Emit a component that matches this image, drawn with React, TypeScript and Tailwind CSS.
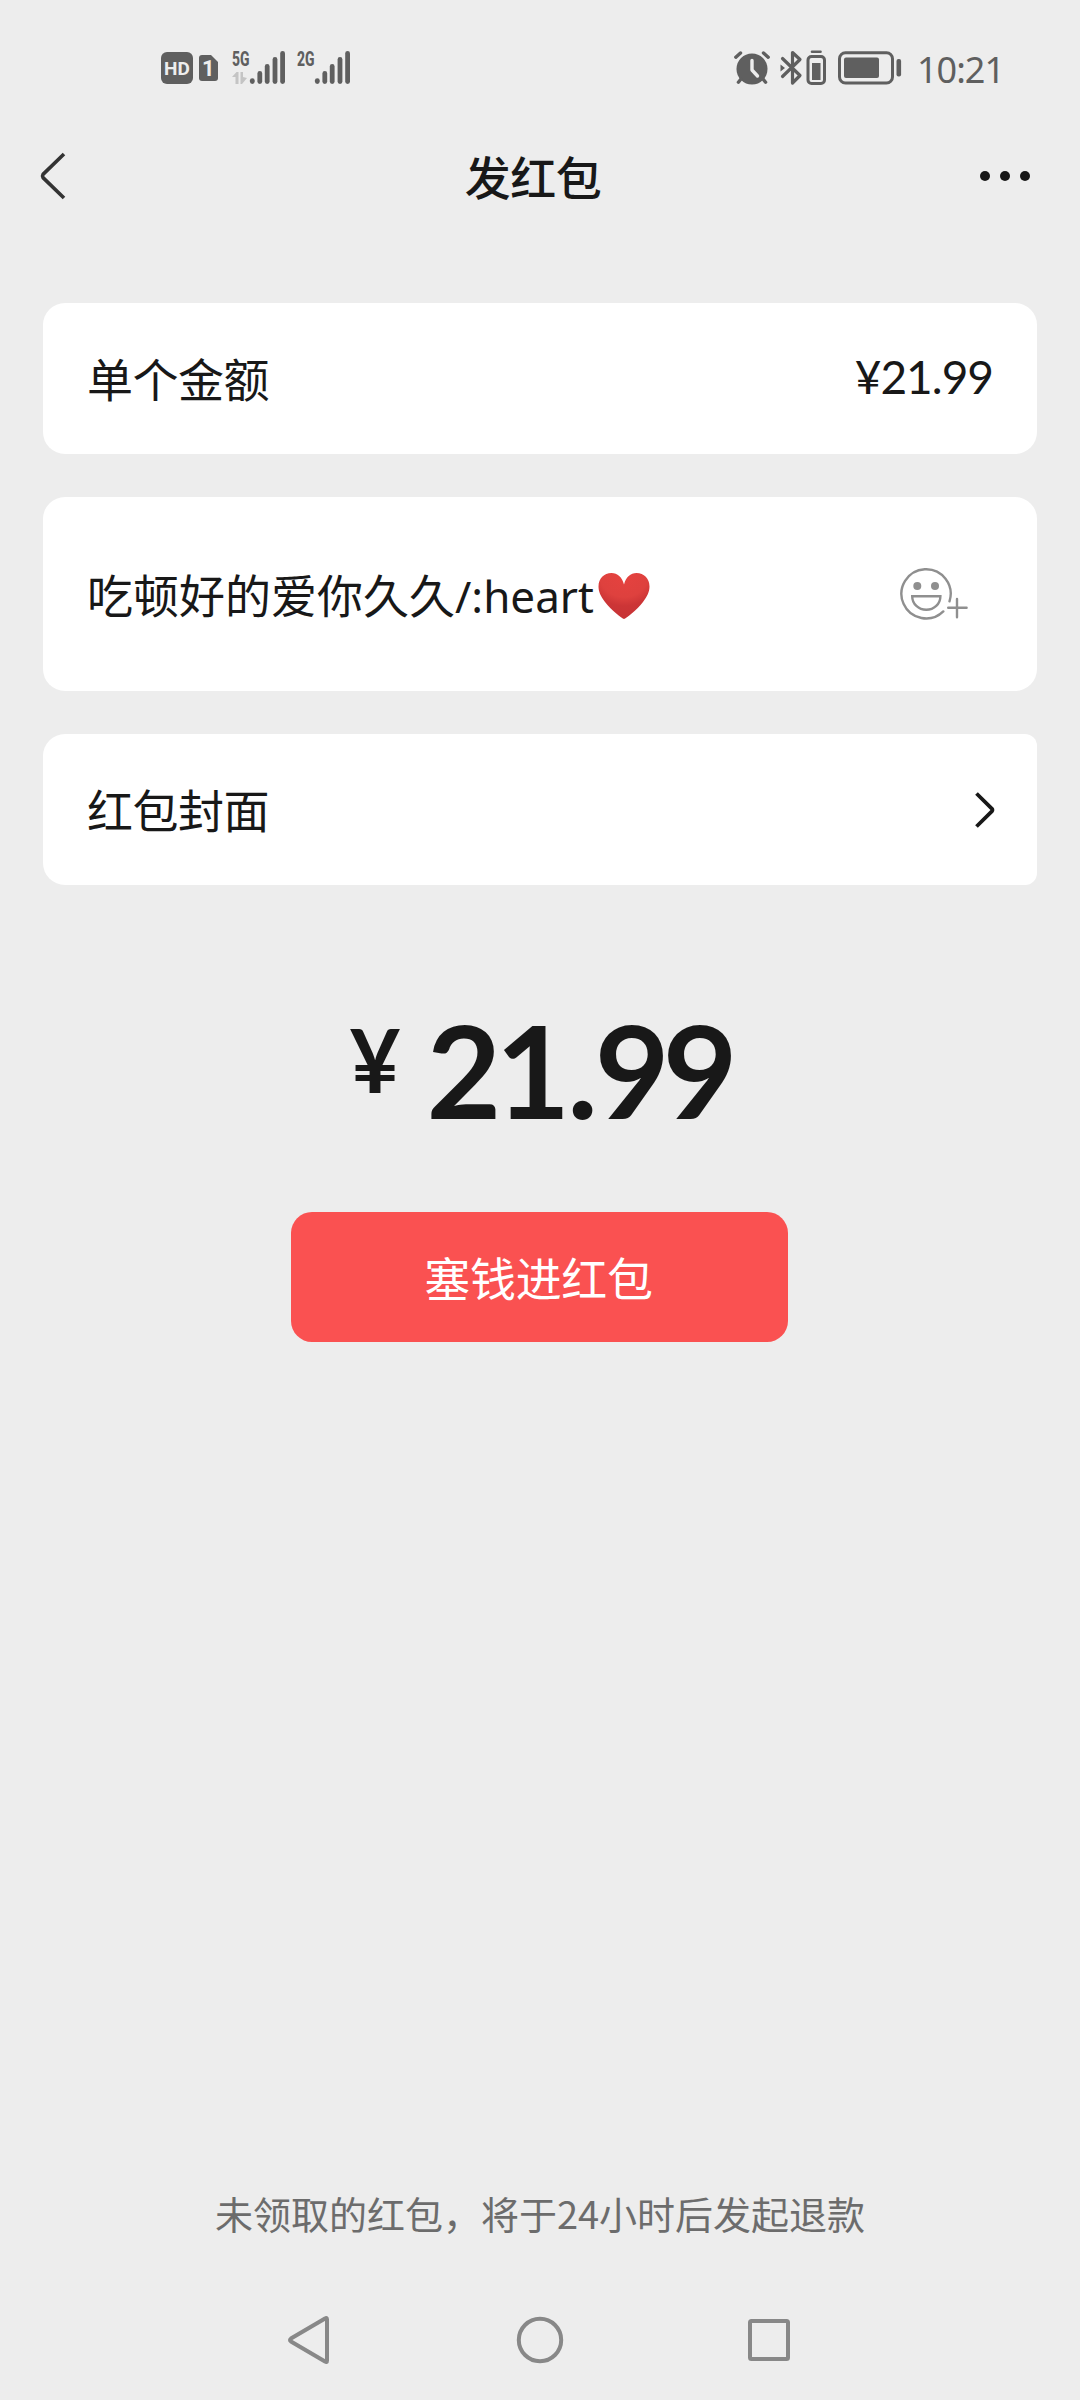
import type { ReactNode } from "react";

const AMOUNT = "21.99";

function SignalBars({ label, transfer = false }: { label: string; transfer?: boolean }) {
  return (
    <svg width="54" height="36" viewBox="0 0 54 36" fill="#5f5f5f" className="overflow-visible">
      <text
        x="0"
        y="16"
        fontSize="20"
        fontWeight="800"
        textLength="17.5"
        lengthAdjust="spacingAndGlyphs"
        className="font-['Roboto',sans-serif]"
      >
        {label}
      </text>
      {transfer && (
        <path d="M0 27L4.500 22H6.500V34H3.500V27ZM8.500 22H11V27L15 28L10 34H8.500Z" fill="#c4c4c4" />
      )}
      <g stroke="#5f5f5f" strokeWidth="4.8" strokeLinecap="round">
        <path d="M20.3 30.6V31.6" />
        <path d="M27.8 23.4V31.6" />
        <path d="M35.2 16.4V31.6" />
        <path d="M43 9.4V31.6" />
        <path d="M50.6 3.4V31.6" />
      </g>
    </svg>
  );
}

function AlarmIcon() {
  return (
    <svg width="36" height="34" viewBox="0 0 36 34" fill="none">
      <circle cx="18" cy="18" r="15.5" fill="#5f5f5f" />
      <path
        d="M1.8 6.2L6.5 2M34.2 6.2L29.5 2M7 28L4.4 31.2M29 28L31.6 31.2"
        stroke="#5f5f5f"
        strokeWidth="3.4"
        strokeLinecap="round"
      />
      <path d="M18 9.5V19L23.5 25" stroke="#ededed" strokeWidth="3.4" strokeLinecap="round" strokeLinejoin="round" />
    </svg>
  );
}

function BluetoothIcon() {
  return (
    <svg width="46" height="36" viewBox="0 0 46 36" fill="none" stroke="#5f5f5f">
      <path
        d="M2.5 8.5L20 25.5L12.5 33V2.5L20 9.5L2.5 26.5"
        strokeWidth="3.2"
        strokeLinecap="round"
        strokeLinejoin="round"
      />
      <path d="M0.5 14.5L5 18L0.5 21.5Z" fill="#5f5f5f" stroke="none" />
      <rect x="28" y="6.5" width="16.5" height="27" rx="3.5" strokeWidth="3" />
      <path d="M32 1.8H40.5" strokeWidth="2.6" strokeLinecap="round" />
      <rect x="32" y="13" width="8.5" height="17" fill="#5f5f5f" stroke="none" />
    </svg>
  );
}

function BatteryIcon() {
  return (
    <svg width="64" height="34" viewBox="0 0 64 34" fill="none">
      <rect x="1.5" y="1.8" width="53" height="30.2" rx="6" stroke="#5f5f5f" strokeWidth="3" />
      <rect x="6" y="6.5" width="35" height="20.5" rx="2" fill="#5f5f5f" />
      <rect x="58.5" y="8" width="4.6" height="17.5" rx="2" fill="#5f5f5f" />
    </svg>
  );
}

function StatusBar() {
  return (
    <div className="flex h-[136px] items-center pr-[76px] pl-[161px] text-[#5f5f5f]">
      <span className="flex h-8 w-8 items-center justify-center rounded-[6px] bg-[#5f5f5f] pt-0.5 font-['Roboto',sans-serif] text-[19px] font-bold text-[#ededed]">
        HD
      </span>
      <svg width="19" height="28" viewBox="0 0 19 28" className="ml-[6px]">
        <path d="M3 1H12L19 8V24Q19 27 16 27H3Q0 27 0 24V4Q0 1 3 1Z" fill="#5f5f5f" />
        <text x="3" y="22" fontSize="22" fontWeight="700" fill="#ededed" className="font-['Roboto',sans-serif]">
          1
        </text>
      </svg>
      <span className="ml-[14px]">
        <SignalBars label="5G" transfer />
      </span>
      <span className="ml-[11px]">
        <SignalBars label="2G" />
      </span>
      <div className="ml-auto flex items-center">
        <AlarmIcon />
        <span className="ml-[10px]">
          <BluetoothIcon />
        </span>
        <span className="ml-3">
          <BatteryIcon />
        </span>
        <span className="ml-[15px] pt-[3px] font-['Noto_Sans',sans-serif] text-[36px] leading-9 tracking-[-1px]">
          10:21
        </span>
      </div>
    </div>
  );
}

function TitleBar() {
  return (
    <header className="flex h-20 items-center justify-between pr-[50px] pl-[38px]">
      <svg width="60" height="50" viewBox="0 0 60 50" fill="none">
        <path
          d="M26 3L5 23.400Q4 25 5 26.600L26 47"
          stroke="#333"
          strokeWidth="3.6"
          strokeLinejoin="round"
        />
      </svg>
      <h1 className="pr-0.5 pb-0.5 text-[46px] leading-none font-medium tracking-[-0.5px]">发红包</h1>
      <svg width="60" height="12" viewBox="0 0 60 12" fill="#181818">
        <circle cx="15" cy="6" r="5" />
        <circle cx="35" cy="6" r="5" />
        <circle cx="55" cy="6" r="5" />
      </svg>
    </header>
  );
}

function Card({ className, children }: { className: string; children: ReactNode }) {
  return <div className={`flex items-center justify-between bg-white pl-11 ${className}`}>{children}</div>;
}

function HeartIcon() {
  return (
    <svg width="52" height="48" viewBox="0 0 52 48">
      <defs>
        <radialGradient id="heart" cx="0.5" cy="0.05" r="0.95">
          <stop offset="0" stopColor="#e5423f" />
          <stop offset="0.5" stopColor="#de413e" />
          <stop offset="0.7" stopColor="#cc3536" />
          <stop offset="1" stopColor="#c73336" />
        </radialGradient>
      </defs>
      <path
        d="M26 47C24 46.5 13 38 7 30C2.5 24 .5 19.500 .5 14.500C.5 6.500 6 1 13.500 1C19.500 1 24 5 26 12.500C28 5 32.500 1 38.500 1C46 1 51.500 6.500 51.500 14.500C51.500 19.500 49.500 24 45 30C39 38 28 46.500 26 47Z"
        fill="url(#heart)"
      />
    </svg>
  );
}

function EmojiAddIcon() {
  return (
    <svg width="70" height="56" viewBox="0 0 70 56" fill="none" stroke="#8f8f8f" strokeWidth="2.4">
      <path d="M49.500 35.300A24.600 24.600 0 1 0 43.300 45.400" strokeLinecap="round" />
      <circle cx="17.300" cy="20" r="4" fill="#8f8f8f" stroke="none" />
      <circle cx="35" cy="20" r="4" fill="#8f8f8f" stroke="none" />
      <path d="M12.200 30.200H40.400C40.400 38 34 43.800 26.300 43.800S12.200 38 12.200 30.200Z" />
      <path d="M48.200 41.700H66.600M57 33V51.300" strokeLinecap="round" />
    </svg>
  );
}

function NavBar() {
  return (
    <nav className="flex h-[120px] items-center justify-between pr-[285px] pl-[284px] text-[#888]">
      <svg width="50" height="52" viewBox="0 0 50 52" fill="none" stroke="currentColor" strokeWidth="4">
        <path d="M41 4.500Q43 3 43 5.500V46.500Q43 49 41 47.500L7 27.500Q5 26 7 24.500Z" />
      </svg>
      <svg width="50" height="50" viewBox="0 0 50 50" fill="none" stroke="currentColor" strokeWidth="4">
        <circle cx="25" cy="25" r="21.200" />
      </svg>
      <svg width="50" height="50" viewBox="0 0 50 50" fill="none" stroke="currentColor" strokeWidth="4">
        <rect x="5" y="6" width="38" height="38" rx="1.500" />
      </svg>
    </nav>
  );
}

export default function App() {
  return (
    <main className="flex h-[2400px] w-[1080px] flex-col bg-[#ededed] font-['Noto_Sans_CJK_SC',sans-serif] text-[#181818]">
      <StatusBar />
      <TitleBar />

      <section className="mt-[87px] flex flex-col gap-[43px] px-[43px] text-[46px] leading-none">
        <Card className="h-[151px] rounded-[22px] pr-11">
          <span className="pb-[3px] tracking-[-0.5px]">单个金额</span>
          <span className="pb-1 font-['Lato',sans-serif] tracking-[-1px]">¥{AMOUNT}</span>
        </Card>

        <Card className="h-[194px] rounded-[22px] pr-[67px]">
          <div className="flex items-center">
            <span className="pb-0.5">吃顿好的爱你久久</span>
            <span className="pt-1 font-['Noto_Sans',sans-serif] text-[44px]">/:heart</span>
            <span className="ml-1 pt-1">
              <HeartIcon />
            </span>
          </div>
          <EmojiAddIcon />
        </Card>

        <Card className="h-[151px] rounded-l-[22px] rounded-r-[12px] pr-[41px]">
          <span className="pb-[3px] tracking-[-0.5px]">红包封面</span>
          <svg width="22" height="40" viewBox="0 0 22 40" fill="none">
            <path
              d="M2.500 3.500L17.800 18.600Q19 20 17.800 21.400L2.500 36.500"
              stroke="#181818"
              strokeWidth="3.800"
              strokeLinejoin="round"
            />
          </svg>
        </Card>
      </section>

      <div className="mt-[119px] flex h-[130px] items-start justify-center font-['Lato',sans-serif] font-bold">
        <span className="mt-[11px] text-[88px] leading-none tracking-[-2px]">¥</span>
        <span className="ml-7 text-[129px] leading-[130px] tracking-[-6px]">
          2<span className="tracking-[-3px]">1.</span>
          <span className="tracking-[-7px]">99</span>
        </span>
      </div>

      <button className="mt-[78px] ml-[291px] h-[130px] w-[497px] rounded-[21px] bg-[#fa5151] pr-2.5 pb-0.5 pl-2 text-[46px] leading-none tracking-[-0.3px] text-white">
        塞钱进红包
      </button>

      <p className="mt-auto mb-[45px] text-center text-[38px] leading-[44px] text-[#6c6c6c]">
        未领取的红包，将于24小时后发起退款
      </p>
      <NavBar />
    </main>
  );
}
